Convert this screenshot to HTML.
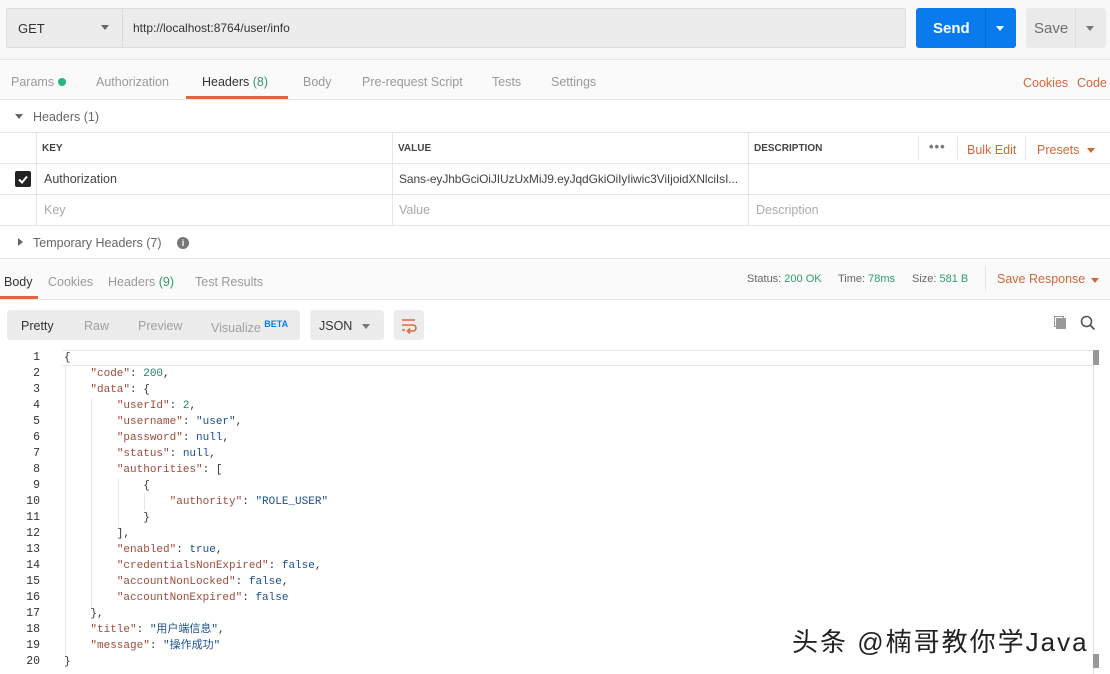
<!DOCTYPE html>
<html><head><meta charset="utf-8">
<style>
*{box-sizing:border-box;margin:0;padding:0}
body{width:1110px;height:674px;overflow:hidden;background:#fff;font-family:"Liberation Sans","Noto Sans CJK SC",sans-serif;font-size:12px;color:#505050;position:relative}
.a{position:absolute;white-space:nowrap}
.hl{position:absolute;left:0;width:1110px;height:1px;background:#e6e6e6}
.vl{position:absolute;width:1px;background:#e6e6e6}
.o{color:#d0683a}
.g{color:#2f9c6b}
pre.code{white-space:pre;font-family:"Liberation Mono","Noto Sans CJK SC",monospace;font-size:11px;line-height:16px}
.k{color:#a14a3a}.n{color:#1f8060}.s{color:#1a4f8f}.b{color:#1a4f8f}.p{color:#333}
.ln{position:absolute;left:0;width:40px;text-align:right;color:#333;font-family:"Liberation Mono",monospace;font-size:11.5px;line-height:16px}
</style></head><body>
<div class="a" style="left:0;top:0;width:1110px;height:60px;background:#f8f8f8"></div>
<div class="a" style="left:6px;top:8px;width:900px;height:40px;background:#ececec;border:1px solid #ddd;border-radius:2px"></div>
<div class="vl" style="left:122px;top:9px;height:38px;background:#d8d8d8"></div>
<div class="a" style="left:18px;top:21px;font-size:13px;color:#333">GET</div>
<div class="a" style="left:101px;top:25px;border-left:4px solid transparent;border-right:4px solid transparent;border-top:5px solid #666"></div>
<div class="a" style="left:133px;top:21px;font-size:12px;color:#333">http://localhost:8764/user/info</div>
<div class="a" style="left:916px;top:8px;width:100px;height:40px;background:#097bed;border-radius:3px"></div>
<div class="vl" style="left:985px;top:8px;height:40px;background:#0a6bd0"></div>
<div class="a" style="left:933px;top:20px;font-size:15px;font-weight:bold;color:#fff">Send</div>
<div class="a" style="left:996px;top:26px;border-left:4px solid transparent;border-right:4px solid transparent;border-top:5px solid #fff"></div>
<div class="a" style="left:1026px;top:8px;width:80px;height:40px;background:#eaeaea;border-radius:3px"></div>
<div class="vl" style="left:1075px;top:8px;height:40px;background:#ddd"></div>
<div class="a" style="left:1034px;top:20px;font-size:15px;color:#707070">Save</div>
<div class="a" style="left:1086px;top:26px;border-left:4px solid transparent;border-right:4px solid transparent;border-top:5px solid #777"></div>
<div class="hl" style="top:59px"></div>
<div class="a" style="left:0;top:60px;width:1110px;height:40px;background:#fafafa"></div>
<div class="a" style="left:11px;top:75px;font-size:12.5px;color:#9a9a9a">Params</div>
<div class="a" style="left:58px;top:78px;width:8px;height:8px;border-radius:50%;background:#26b47f"></div>
<div class="a" style="left:96px;top:75px;font-size:12.5px;color:#9a9a9a">Authorization</div>
<div class="a" style="left:202px;top:75px;font-size:12.5px;color:#333">Headers <span class="g">(8)</span></div>
<div class="a" style="left:186px;top:96px;width:102px;height:3px;background:#e0673a"></div>
<div class="a" style="left:303px;top:75px;font-size:12.5px;color:#9a9a9a">Body</div>
<div class="a" style="left:362px;top:75px;font-size:12.5px;color:#9a9a9a">Pre-request Script</div>
<div class="a" style="left:492px;top:75px;font-size:12.5px;color:#9a9a9a">Tests</div>
<div class="a" style="left:551px;top:75px;font-size:12.5px;color:#9a9a9a">Settings</div>
<div class="a o" style="left:1023px;top:76px;font-size:12.5px">Cookies</div>
<div class="a o" style="left:1077px;top:76px;font-size:12.5px">Code</div>
<div class="hl" style="top:99px"></div>
<div class="a" style="left:15px;top:114px;border-left:4px solid transparent;border-right:4px solid transparent;border-top:5px solid #666"></div>
<div class="a" style="left:33px;top:110px;font-size:12.5px;color:#666">Headers (1)</div>
<div class="hl" style="top:132px"></div>
<div class="a" style="left:42px;top:143px;font-size:10px;font-weight:bold;color:#444">KEY</div>
<div class="a" style="left:398px;top:143px;font-size:10px;font-weight:bold;color:#444">VALUE</div>
<div class="a" style="left:754px;top:143px;font-size:10px;font-weight:bold;color:#444">DESCRIPTION</div>
<div class="a" style="left:929px;top:139px;font-size:13px;color:#777;font-weight:bold;letter-spacing:1px">•••</div>
<div class="vl" style="left:918px;top:136px;height:24px"></div>
<div class="vl" style="left:957px;top:136px;height:24px"></div>
<div class="vl" style="left:1025px;top:136px;height:24px"></div>
<div class="a o" style="left:967px;top:143px;font-size:12.5px">Bulk Edit</div>
<div class="a o" style="left:1037px;top:143px;font-size:12.5px">Presets</div>
<div class="a" style="left:1087px;top:148px;border-left:4px solid transparent;border-right:4px solid transparent;border-top:5px solid #d0683a"></div>
<div class="hl" style="top:163px"></div>
<div class="hl" style="top:194px"></div>
<div class="hl" style="top:225px"></div>
<div class="hl" style="top:258px"></div>
<div class="vl" style="left:36px;top:133px;height:93px"></div>
<div class="vl" style="left:392px;top:133px;height:93px"></div>
<div class="vl" style="left:748px;top:133px;height:93px"></div>
<div class="a" style="left:15px;top:171px;width:16px;height:16px;background:#222;border-radius:2px"></div>
<svg class="a" style="left:15px;top:171px" width="16" height="16"><path d="M4 8.5l3 3 5-6" stroke="#fff" stroke-width="2" fill="none"/></svg>
<div class="a" style="left:44px;top:172px;font-size:12.5px;color:#444">Authorization</div>
<div class="a" style="left:399px;top:172px;font-size:12px;color:#444;letter-spacing:-0.1px">Sans-eyJhbGciOiJIUzUxMiJ9.eyJqdGkiOiIyIiwic3ViIjoidXNlciIsI...</div>
<div class="a" style="left:44px;top:203px;font-size:12.5px;color:#aaa">Key</div>
<div class="a" style="left:399px;top:203px;font-size:12.5px;color:#aaa">Value</div>
<div class="a" style="left:756px;top:203px;font-size:12.5px;color:#aaa">Description</div>
<div class="a" style="left:18px;top:238px;border-top:4px solid transparent;border-bottom:4px solid transparent;border-left:5px solid #666"></div>
<div class="a" style="left:33px;top:236px;font-size:12.5px;color:#666">Temporary Headers (7)</div>
<div class="a" style="left:177px;top:237px;width:12px;height:12px;border-radius:50%;background:#777;color:#fff;font-size:9px;text-align:center;line-height:12px;font-weight:bold">i</div>
<div class="a" style="left:0;top:259px;width:1110px;height:40px;background:#fafafa"></div>
<div class="a" style="left:4px;top:275px;font-size:12.5px;color:#333">Body</div>
<div class="a" style="left:0;top:296px;width:38px;height:3px;background:#e0673a"></div>
<div class="a" style="left:48px;top:275px;font-size:12.5px;color:#9a9a9a">Cookies</div>
<div class="a" style="left:108px;top:275px;font-size:12.5px;color:#9a9a9a">Headers <span class="g">(9)</span></div>
<div class="a" style="left:195px;top:275px;font-size:12.5px;color:#9a9a9a">Test Results</div>
<div class="a" style="left:747px;top:273px;font-size:11px;color:#666">Status: <span class="g">200 OK</span></div>
<div class="a" style="left:838px;top:273px;font-size:11px;color:#666">Time: <span class="g">78ms</span></div>
<div class="a" style="left:912px;top:273px;font-size:11px;color:#666">Size: <span class="g">581 B</span></div>
<div class="vl" style="left:985px;top:266px;height:26px"></div>
<div class="a o" style="left:997px;top:272px;font-size:12.5px">Save Response</div>
<div class="a" style="left:1091px;top:278px;border-left:4px solid transparent;border-right:4px solid transparent;border-top:5px solid #d0683a"></div>
<div class="hl" style="top:299px"></div>
<div class="a" style="left:7px;top:310px;width:293px;height:30px;background:#ececec;border-radius:3px"></div>
<div class="a" style="left:21px;top:319px;font-size:12.5px;color:#333">Pretty</div>
<div class="a" style="left:84px;top:319px;font-size:12.5px;color:#a0a0a0">Raw</div>
<div class="a" style="left:138px;top:319px;font-size:12.5px;color:#a0a0a0">Preview</div>
<div class="a" style="left:211px;top:319px;font-size:12.5px;color:#a0a0a0">Visualize <sup style="font-size:9px;color:#097bed;font-weight:bold">BETA</sup></div>
<div class="a" style="left:310px;top:310px;width:74px;height:30px;background:#ececec;border-radius:3px"></div>
<div class="a" style="left:319px;top:319px;font-size:12.5px;color:#333">JSON</div>
<div class="a" style="left:362px;top:324px;border-left:4px solid transparent;border-right:4px solid transparent;border-top:5px solid #777"></div>
<div class="a" style="left:394px;top:310px;width:30px;height:30px;background:#ececec;border-radius:3px"></div>
<svg class="a" style="left:399px;top:315px" width="20" height="20"><path d="M3 5h13M3 10h11a3 3 0 0 1 0 6h-5M11 13.5l-2.5 2.5 2.5 2.5M3 15h3" stroke="#e0673a" stroke-width="1.6" fill="none"/></svg>
<div class="a" style="left:1056px;top:318px;width:10px;height:11px;background:#999"></div>
<div class="a" style="left:1054px;top:316px;width:10px;height:11px;border:1px solid #999"></div>
<svg class="a" style="left:1080px;top:315px" width="16" height="16"><circle cx="6.5" cy="6.5" r="5" stroke="#555" stroke-width="1.6" fill="none"/><path d="M10 10l4.5 4.5" stroke="#555" stroke-width="1.8"/></svg>
<div class="a" style="left:62px;top:350px;width:1032px;height:16px;border-top:1px solid #e8e8e8;border-bottom:1px solid #e8e8e8"></div>
<div class="vl" style="left:1093px;top:350px;height:324px;background:#ddd"></div>
<div class="a" style="left:1093px;top:350px;width:6px;height:15px;background:#999"></div>
<div class="a" style="left:1093px;top:654px;width:6px;height:14px;background:#999"></div>
<div class="vl" style="left:65px;top:366px;height:290px"></div>
<div class="vl" style="left:91px;top:398px;height:210px"></div>
<div class="vl" style="left:118px;top:478px;height:48px"></div>
<div class="vl" style="left:144px;top:494px;height:16px"></div>
<div class="a" style="left:0;top:350px">
<div class="ln" style="top:0">1</div><div class="ln" style="top:16px">2</div><div class="ln" style="top:32px">3</div><div class="ln" style="top:48px">4</div><div class="ln" style="top:64px">5</div><div class="ln" style="top:80px">6</div><div class="ln" style="top:96px">7</div><div class="ln" style="top:112px">8</div><div class="ln" style="top:128px">9</div><div class="ln" style="top:144px">10</div><div class="ln" style="top:160px">11</div><div class="ln" style="top:176px">12</div><div class="ln" style="top:192px">13</div><div class="ln" style="top:208px">14</div><div class="ln" style="top:224px">15</div><div class="ln" style="top:240px">16</div><div class="ln" style="top:256px">17</div><div class="ln" style="top:272px">18</div><div class="ln" style="top:288px">19</div><div class="ln" style="top:304px">20</div>
</div>
<pre class="a code p" style="left:64px;top:350px;white-space:pre">{
    <span class="k">"code"</span>: <span class="n">200</span>,
    <span class="k">"data"</span>: {
        <span class="k">"userId"</span>: <span class="n">2</span>,
        <span class="k">"username"</span>: <span class="s">"user"</span>,
        <span class="k">"password"</span>: <span class="b">null</span>,
        <span class="k">"status"</span>: <span class="b">null</span>,
        <span class="k">"authorities"</span>: [
            {
                <span class="k">"authority"</span>: <span class="s">"ROLE_USER"</span>
            }
        ],
        <span class="k">"enabled"</span>: <span class="b">true</span>,
        <span class="k">"credentialsNonExpired"</span>: <span class="b">false</span>,
        <span class="k">"accountNonLocked"</span>: <span class="b">false</span>,
        <span class="k">"accountNonExpired"</span>: <span class="b">false</span>
    },
    <span class="k">"title"</span>: <span class="s">"用户端信息"</span>,
    <span class="k">"message"</span>: <span class="s">"操作成功"</span>
}</pre>
<div class="a" style="left:792px;top:622px;font-size:26px;letter-spacing:2px;color:#222;font-family:'Liberation Sans','Noto Sans CJK SC',sans-serif;text-shadow:1px 1px 0 #fff,-1px -1px 0 #fff">头条 @楠哥教你学Java</div>
</body></html>
